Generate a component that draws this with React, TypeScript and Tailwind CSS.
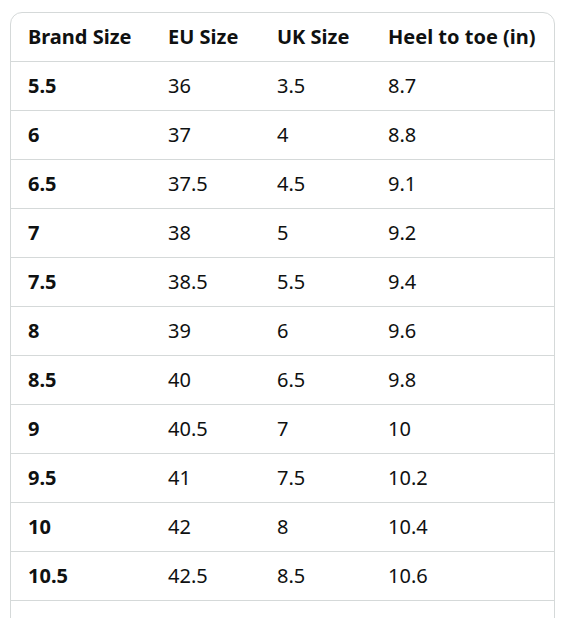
const headers = ["Brand Size", "EU Size", "UK Size", "Heel to toe (in)"];

const rows = [
  ["5.5", "36", "3.5", "8.7"],
  ["6", "37", "4", "8.8"],
  ["6.5", "37.5", "4.5", "9.1"],
  ["7", "38", "5", "9.2"],
  ["7.5", "38.5", "5.5", "9.4"],
  ["8", "39", "6", "9.6"],
  ["8.5", "40", "6.5", "9.8"],
  ["9", "40.5", "7", "10"],
  ["9.5", "41", "7.5", "10.2"],
  ["10", "42", "8", "10.4"],
  ["10.5", "42.5", "8.5", "10.6"],
  ["11", "43", "9", "10.8"],
  ["11.5", "43.5", "9.5", "11"],
];

const cols = "grid grid-cols-[140px_109px_111px_1fr]";

export default function App() {
  return (
    <div className="bg-white min-h-screen pt-[12px] pl-[10px] pr-[12px] text-[#0f1111]" style={{ fontFamily: '"Noto Sans", "Open Sans", Arial, sans-serif' }}>
      <div className="w-[545px] border border-[#d5d9d9] rounded-[12px] overflow-hidden">
        <div className={`${cols} h-[49px] border-b border-[#d5d9d9]`}>
          {headers.map((h) => (
            <div key={h} className="flex items-center pl-[17px] text-[20px] font-bold leading-none whitespace-nowrap">
              {h}
            </div>
          ))}
        </div>
        {rows.map((r, i) => (
          <div key={i} className={`${cols} h-[49px] border-b border-[#d5d9d9]`}>
            {r.map((c, j) => (
              <div key={j} className={`flex items-center pl-[17px] text-[20px] leading-none ${j === 0 ? "font-bold" : ""}`}>
                {c}
              </div>
            ))}
          </div>
        ))}
      </div>
    </div>
  );
}
